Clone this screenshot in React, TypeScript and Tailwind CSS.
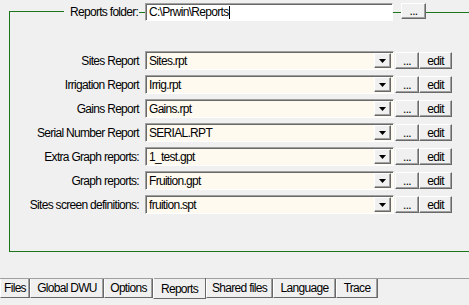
import React from "react";

const GREEN = "border-[#1c771c]";

const raised =
  "border border-t-white border-l-white border-r-[#696969] border-b-[#696969] shadow-[inset_-1px_-1px_0_#a0a0a0] bg-[#f0f0f0]";
const sunken =
  "border border-t-[#a0a0a0] border-l-[#a0a0a0] border-r-white border-b-white shadow-[inset_1px_1px_0_#696969]";

const ROWS = [
  { label: "Sites Report", value: "Sites.rpt" },
  { label: "Irrigation Report", value: "Irrig.rpt" },
  { label: "Gains Report", value: "Gains.rpt" },
  { label: "Serial Number Report", value: "SERIAL.RPT" },
  { label: "Extra Graph reports:", value: "1_test.gpt" },
  { label: "Graph reports:", value: "Fruition.gpt" },
  { label: "Sites screen definitions:", value: "fruition.spt" },
];

const TABS = [
  { name: "Files", w: "w-[30px]" },
  { name: "Global DWU", w: "w-[74px]" },
  { name: "Options", w: "w-[49px]" },
  { name: "Reports", w: "w-[53px]", active: true },
  { name: "Shared files", w: "w-[67px]" },
  { name: "Language", w: "w-[63px]" },
  { name: "Trace", w: "w-[42px]" },
];

function Btn({ children, className }: { children: React.ReactNode; className: string }) {
  return (
    <div className={`${raised} ${className} flex items-center justify-center leading-none`}>
      {children}
    </div>
  );
}

export default function App() {
  return (
    <div
      className="w-[469px] h-[305px] bg-[#f0f0f0] overflow-hidden text-black text-[12px] tracking-[-0.7px] whitespace-nowrap"
      style={{ fontFamily: '"Liberation Sans", Arial, sans-serif' }}
    >
      {/* Group box with folder header */}
      <div className="pt-[3px]">
        <div className="flex items-center h-[18px]">
          <div className={`ml-[9px] w-[55px] self-end h-[10px] border-l border-t ${GREEN}`} />
          <span className="ml-[6px] leading-none">Reports folder:</span>
          <div className={`ml-[1px] flex-1 border-t ${GREEN}`} />
          <div className={`${sunken} bg-white w-[248px] h-[18px] flex items-center pl-[3px]`}>
            C:\Prwin\Reports<span className="w-px h-[13px] bg-black" />
          </div>
          <div className={`w-[8px] border-t ${GREEN}`} />
          <Btn className="w-[25px] h-[16px] self-start">...</Btn>
          <div className={`w-[43px] border-t ${GREEN}`} />
        </div>

        <div className={`ml-[9px] h-[231px] border-l border-b ${GREEN} pt-[30px] flex flex-col gap-[5px]`}>
          {ROWS.map((r) => (
            <div key={r.label} className="flex items-center h-[19px]">
              <div className="w-[129px] text-right leading-none">{r.label}</div>
              <div className={`${sunken} ml-[6px] w-[249px] h-[19px] bg-[#fffaf0] flex items-center pl-[3px] pr-[2px]`}>
                <span className="flex-1 leading-none">{r.value}</span>
                <Btn className="w-[17px] h-[15px]">
                  <svg width="7" height="4" viewBox="0 0 7 4">
                    <path d="M0 0H7L3.5 4Z" fill="black" />
                  </svg>
                </Btn>
              </div>
              <Btn className="ml-[1px] w-[24px] h-[17px]">...</Btn>
              <Btn className="w-[33px] h-[17px]">edit</Btn>
            </div>
          ))}
        </div>
      </div>

      {/* Tabs */}
      <div className="mt-[26px] border-t border-[#a0a0a0] flex items-start">
        {TABS.map((t) =>
          t.active ? (
            <div
              key={t.name}
              className={`${t.w} h-[21px] -mt-px border-l border-l-white border-r border-r-[#696969] border-b border-b-[#696969] flex items-end justify-center pb-[3px] leading-none`}
            >
              {t.name}
            </div>
          ) : (
            <div
              key={t.name}
              className={`${t.w} h-[19px] border-l border-l-white border-r border-r-[#696969] border-b border-b-[#696969] shadow-[inset_-1px_0_0_#a0a0a0] flex items-center justify-center leading-none`}
            >
              {t.name}
            </div>
          )
        )}
      </div>
    </div>
  );
}
